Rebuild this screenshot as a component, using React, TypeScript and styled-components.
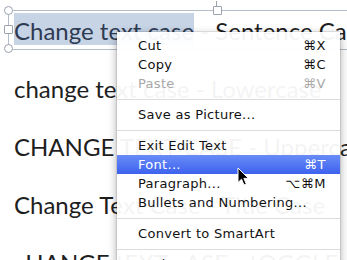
import React, { FC } from 'react';
import styled, { createGlobalStyle } from 'styled-components';

const GlobalStyle = createGlobalStyle`
  html, body {
    margin: 0;
    padding: 0;
    background: #fff;
    overflow: hidden;
  }
`;

const Page = styled.div`
  position: relative;
  width: 347px;
  height: 260px;
  overflow: hidden;
  background: #fff;
`;

const Slide = styled.div`
  display: flex;
  flex-direction: column;
  padding: 2px 0 0 14px;
  font-family: Lato, 'Open Sans', sans-serif;
  font-size: 24px;
  color: #1e1e1e;
  white-space: nowrap;
`;

const Line = styled.div`
  height: 58px;
  line-height: 58px;
`;

const Selected = styled.span`
  background: #c7d4e6;
  color: #2e3b52;
  padding-top: 3px;
`;

const SelectionFrame = styled.div`
  position: absolute;
  left: 8px;
  top: 10px;
  width: 420px;
  height: 40px;
  border: 1px solid #b4bcc8;
  box-sizing: border-box;
`;

const Handle = styled.div<{ $round?: boolean; $x: string; $y: string }>`
  position: absolute;
  left: ${(p) => p.$x};
  top: ${(p) => p.$y};
  width: 7px;
  height: 7px;
  margin: -5px 0 0 -5px;
  background: #fff;
  border: 1px solid #9aa2ae;
  border-radius: ${(p) => (p.$round ? '50%' : '1px')};
`;

const Stem = styled.div`
  position: absolute;
  left: 207px;
  top: -10px;
  width: 1px;
  height: 7px;
  background: #9aa2ae;
`;

const Menu = styled.div`
  position: absolute;
  left: 117px;
  top: 32px;
  width: 223px;
  padding: 4px 0;
  background: rgba(255, 255, 255, 0.95);
  box-shadow: 0 3px 10px rgba(0, 0, 0, 0.35), 0 0 0 1px rgba(0, 0, 0, 0.08);
  border-radius: 0 0 5px 5px;
  font-family: 'DejaVu Sans', 'Liberation Sans', sans-serif;
  font-size: 13px;
  letter-spacing: 0.3px;
  color: #111;
`;

const Item = styled.div<{ $active?: boolean; $disabled?: boolean }>`
  display: flex;
  justify-content: space-between;
  align-items: center;
  height: 19px;
  padding: 0 14px 0 21px;
  color: ${(p) => (p.$active ? '#fff' : p.$disabled ? '#a8a8a8' : '#111')};
  background: ${(p) =>
    p.$active ? 'linear-gradient(to bottom, #6a8cf6, #3c62ef)' : 'transparent'};
`;

const Shortcut = styled.span`
  letter-spacing: 0.5px;
`;

const Separator = styled.div`
  height: 12px;
  display: flex;
  align-items: center;

  &::after {
    content: '';
    flex: 1;
    height: 1px;
    background: #dcdcdc;
  }
`;

const Cursor = styled.svg`
  position: absolute;
  left: 237px;
  top: 167px;
`;

interface IMenuEntry {
  label?: string;
  shortcut?: string;
  active?: boolean;
  disabled?: boolean;
}

const entries: IMenuEntry[] = [
  { label: 'Cut', shortcut: '⌘X' },
  { label: 'Copy', shortcut: '⌘C' },
  { label: 'Paste', shortcut: '⌘V', disabled: true },
  {},
  { label: 'Save as Picture...' },
  {},
  { label: 'Exit Edit Text' },
  { label: 'Font...', shortcut: '⌘T', active: true },
  { label: 'Paragraph...', shortcut: '⌥⌘M' },
  { label: 'Bullets and Numbering...' },
  {},
  { label: 'Convert to SmartArt' },
  {},
  { label: 'Look Up...' },
];

const App: FC = () => (
  <Page>
    <GlobalStyle />
    <Slide>
      <Line>
        <Selected>Change text case</Selected> - Sentence Case
      </Line>
      <Line>change text case - Lowercase</Line>
      <Line>CHANGE TEXT CASE - Uppercase</Line>
      <Line>Change Text Case - Title Case</Line>
      <Line>cHANGE tEXT cASE - tOGGLE cASE</Line>
    </Slide>

    <SelectionFrame>
      <Stem />
      <Handle $round $x="0" $y="0" />
      <Handle $x="0" $y="50%" />
      <Handle $round $x="0" $y="100%" />
      <Handle $x="50%" $y="0" />
    </SelectionFrame>

    <Menu>
      {entries.map((e, i) =>
        e.label ? (
          <Item key={i} $active={e.active} $disabled={e.disabled}>
            <span>{e.label}</span>
            {e.shortcut && <Shortcut>{e.shortcut}</Shortcut>}
          </Item>
        ) : (
          <Separator key={i} />
        )
      )}
    </Menu>

    <Cursor width="13" height="20" viewBox="0 0 13 20">
      <path
        d="M1 1 L1 15.5 L4.5 12.2 L7 18 L9.3 17 L6.9 11.4 L11.5 11.4 Z"
        fill="#000"
        stroke="#fff"
        strokeWidth="1"
        strokeLinejoin="round"
      />
    </Cursor>
  </Page>
);

export default App;
